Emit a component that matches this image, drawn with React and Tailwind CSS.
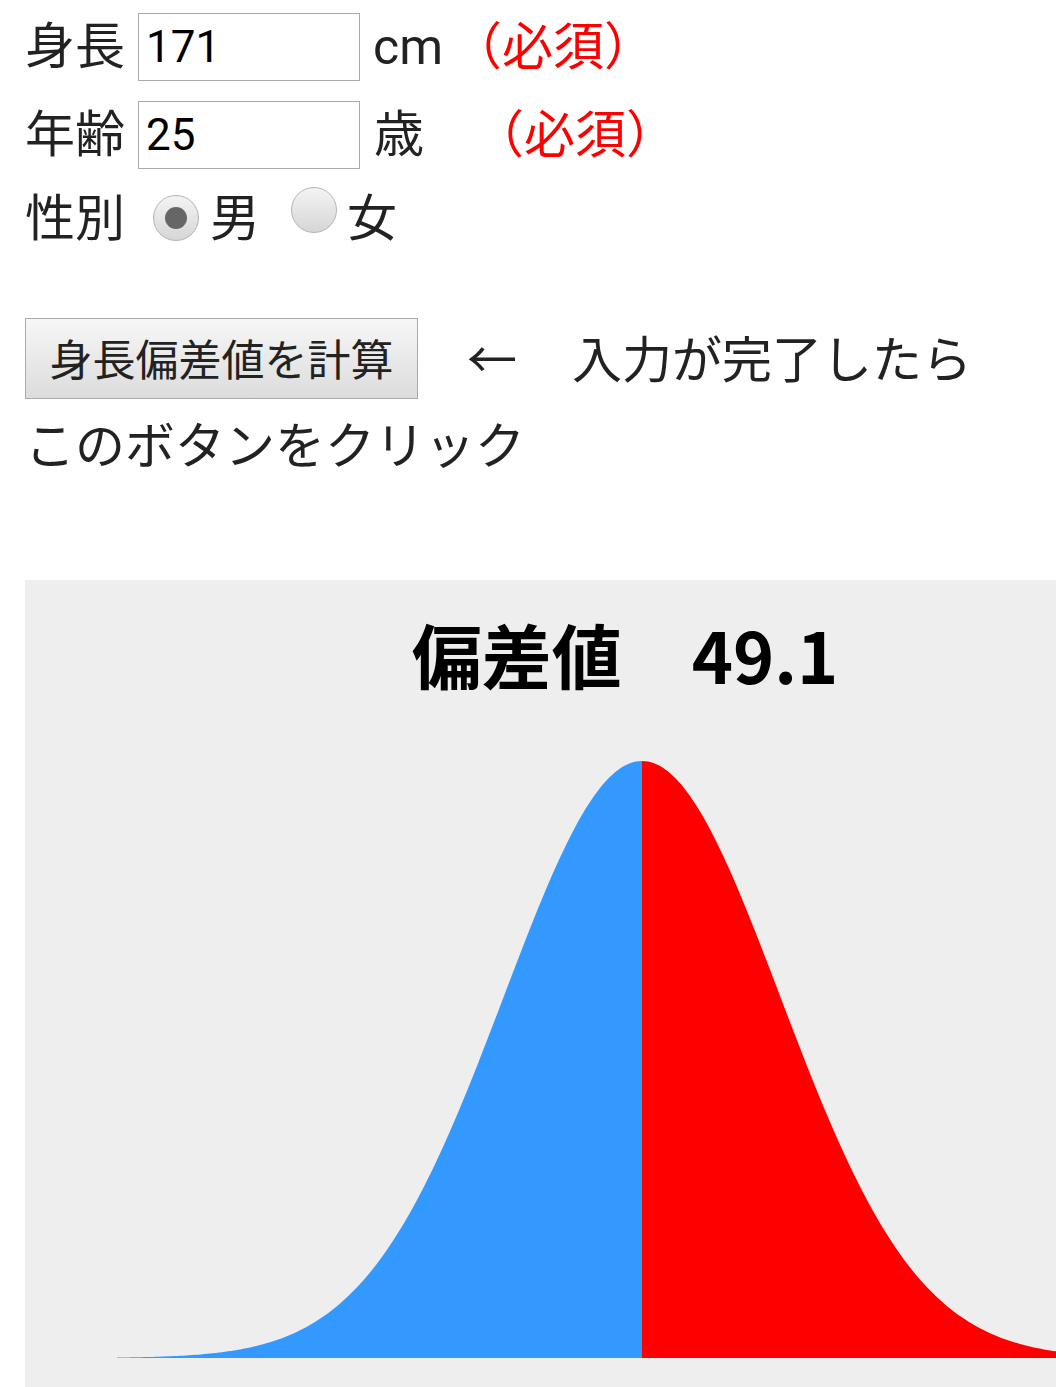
import React from 'react';

const FONT = { fontFamily: 'Roboto, "Noto Sans CJK JP", sans-serif' };

// normal curve drawn on the chart (coords relative to the grey panel)
const MEAN = 617;
const SIGMA = 138;
const BASE = 779;
const PEAK = 597;

const yAt = (x) => BASE - PEAK * Math.exp(-((x - MEAN) ** 2) / (2 * SIGMA * SIGMA));

const areaPath = (from, to) => {
  let d = `M${from},${BASE}`;
  for (let x = from; x <= to; x += 3) d += ` L${x},${yAt(x).toFixed(2)}`;
  d += ` L${to},${yAt(to).toFixed(2)} L${to},${BASE} Z`;
  return d;
};

function Radio({ checked }) {
  return (
    <span className="relative inline-flex h-[46px] w-[46px] items-center justify-center rounded-full border border-[#b4b4b4] bg-gradient-to-b from-[#f4f4f4] to-[#d6d6d6]">
      {checked && <span className="h-[22px] w-[22px] rounded-full bg-[#666]" />}
    </span>
  );
}

function Field({ value }) {
  return (
    <div className="ml-[13px] flex h-[68px] w-[222px] items-center border border-[#a9a9a9] bg-white pl-[7px] text-[44px] text-black">
      {value}
    </div>
  );
}

export default function App() {
  return (
    <div className="h-[1387px] w-[1056px] overflow-hidden bg-white text-[#222]" style={FONT}>
      <div className="pl-[25px] pt-[13px]">
        <div className="flex h-[68px] items-center text-[50px] leading-none">
          <span>身長</span>
          <Field value="171" />
          <span className="ml-[13px]">cm</span>
          <span className="ml-[8px] text-[51px] text-[#f00]">（必須）</span>
        </div>

        <div className="mt-[20px] flex h-[68px] items-center text-[50px] leading-none">
          <span>年齢</span>
          <Field value="25" />
          <span className="ml-[14px]">歳</span>
          <span className="ml-[49px] text-[51px] text-[#f00]">（必須）</span>
        </div>

        <div className="mt-[11px] flex h-[68px] items-center text-[50px] leading-none">
          <span className="pt-[10px]">性別</span>
          <span className="ml-[28px]"><Radio checked /></span>
          <span className="ml-[11px] pt-[10px]">男</span>
          <span className="ml-[31px]"><Radio /></span>
          <span className="ml-[10px] pt-[10px]">女</span>
        </div>

        <div className="mt-[70px] flex h-[81px] items-center text-[50px] leading-none">
          <button className="flex h-[81px] w-[393px] items-center justify-center border border-[#aaa] bg-gradient-to-b from-[#f7f7f7] to-[#dcdcdc] pt-[5px] text-[43px] text-[#222]">
            身長偏差値を計算
          </button>
          <span className="ml-[49px] pt-[4px]">←</span>
          <span className="ml-[55px] pt-[4px]">入力が完了したら</span>
        </div>

        <div className="mt-[18px] flex h-[60px] items-center text-[50px] leading-none">
          このボタンをクリック
        </div>

        <div className="mt-[103px] h-[810px] w-[1240px] bg-[#eeeeee]">
          <div
            className="w-[1200px] pt-[39px] text-center text-[70px] font-bold leading-none text-black"
            style={{ fontFamily: '"Noto Sans CJK JP", sans-serif' }}
          >
            偏差値　49.1
          </div>
          <svg width="1240" height="740" viewBox="0 110 1240 740" className="block">
            <path d={areaPath(92, MEAN)} fill="#3399ff" />
            <path d={areaPath(MEAN, 1240)} fill="#ff0000" />
          </svg>
        </div>
      </div>
    </div>
  );
}
